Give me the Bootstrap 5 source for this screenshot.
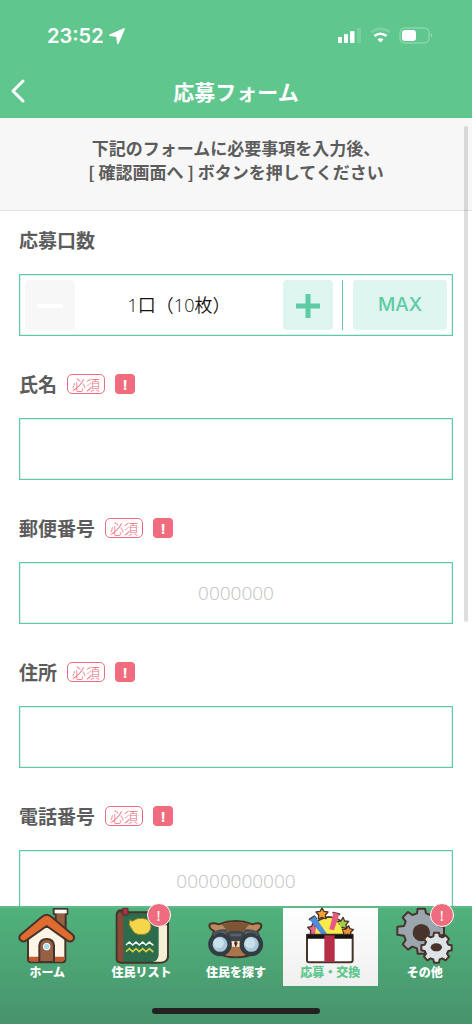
<!DOCTYPE html>
<html lang="ja">
<head>
<meta charset="utf-8">
<meta name="viewport" content="width=device-width, initial-scale=1">
<title>応募フォーム</title>
<link href="https://cdn.jsdelivr.net/npm/bootstrap@5.3.0/dist/css/bootstrap.min.css" rel="stylesheet">
<style>
  :root { --leaf: #5fc78e; --mint: #5fcba5; --rose: #ee6c7d; --ink: #5c5c5c; }
  body { font-family: "Noto Sans CJK JP", sans-serif; color: var(--ink); background: #fff; }
  .app-header { background: var(--leaf); }
  .status-row { height: 64px; padding: 8px 40px 0 47px; }
  .clock { font: 600 20px/24px Inter, sans-serif; }
  .title-row { display: grid; grid-template-columns: 44px 1fr 44px; height: 54px; }
  .title-row h1 { font-size: 21px; line-height: 54px; font-weight: 700; }
  .notice { background: #f7f7f7; border-bottom: 1px solid #e4e4e4; padding: 18px 16px 26px; font-size: 17px; line-height: 24px; font-weight: 700; }
  .entry-form { padding: 15px 19px 0 19px; }
  .entry { margin-bottom: 34px; }
  .entry-head { height: 28px; margin-bottom: 20px; gap: 10px; }
  .entry-head label, .entry-head .caption-text { font-size: 19px; line-height: 28px; font-weight: 700; }
  .need { border: 1px solid var(--rose); border-radius: 5px; color: var(--rose); font-size: 14px; line-height: 18px; font-weight: 300; padding: 0 4px; }
  .alert-mark { width: 20px; height: 20px; border-radius: 4px; background: var(--rose); color: #fff; font: 700 15px/20px "Noto Sans", sans-serif; text-align: center; }
  .box { border: 1px solid var(--mint); border-radius: 0; height: 62px; box-shadow: 0 0 0 1px #d9f3ea inset; }
  input.box { font-family: "Open Sans", "Noto Sans CJK JP", sans-serif; font-size: 19px; font-weight: 300; text-align: center; }
  input.box::placeholder { color: #c0c0c0; opacity: 1; }
  .stepper { padding: 5px; }
  .tile { height: 50px; border: 0; border-radius: 4px; background: #def6ef; color: var(--mint); }
  .tile:disabled { background: #f7f7f7; color: #fff; opacity: 1; }
  .tile-sq { width: 50px; }
  .tile-max { width: 94px; font: 500 19px/24px Inter, sans-serif; }
  .amount { font-family: "Open Sans", "Noto Sans CJK JP", sans-serif; font-size: 18px; line-height: 24px; font-weight: 350; color: #111; }
  .rule { width: 1px; height: 50px; margin: 0 10px 0 9px; background: var(--mint); }
  .scroll-thumb { top: 8px; right: 4px; width: 4px; height: 63%; border-radius: 2px; background: rgba(0,0,0,.13); }
  .tabs { background: linear-gradient(#50b27d, #48946b); border-top: 2px solid #62b98a; height: 118px; }
  .tab { height: 78px; font-size: 12px; line-height: 16px; font-weight: 900; color: #fff; text-decoration: none; }
  .tab svg { width: 60px; height: 56px; overflow: visible; }
  .tab.current { background: linear-gradient(#fff, #efefef); color: var(--leaf); }
  .dot { top: -5px; left: calc(50% + 5px); width: 24px; height: 24px; border: 1px solid #fff; border-radius: 50%; background: var(--rose); color: #fff; font: 400 15px/22px "Noto Sans", sans-serif; }
  .home-bar { bottom: 10px; left: 50%; width: 168px; height: 6px; margin-left: -84px; border-radius: 3px; background: #222; }
  .ol { stroke: #47332a; stroke-width: 6; stroke-linejoin: round; stroke-linecap: round; }
</style>
</head>
<body>
<div class="d-flex flex-column vh-100 overflow-hidden">
  <header class="app-header text-white flex-shrink-0">
    <div class="status-row d-flex align-items-center">
      <span class="clock">23:52</span>
      <svg class="ms-1" width="18" height="18" viewBox="0 0 18 18" aria-hidden="true"><path d="M16 2 2 8.200 9 9.200 10 16Z" fill="#fff" stroke="#fff" stroke-width="1.800" stroke-linejoin="round"/></svg>
      <svg class="ms-auto" width="96" height="18" viewBox="0 0 96 18" aria-hidden="true">
        <g fill="#fff"><rect x="2" y="10" width="4" height="6" rx="1"/><rect x="8" y="7" width="4" height="9" rx="1"/><rect x="14" y="4" width="4.500" height="12" rx="1"/><rect x="21" y="1" width="4" height="15" rx="1" opacity=".15"/></g>
        <g fill="none" stroke="#fff" stroke-width="2.600"><path d="M35.500 5.500a13 13 0 0 1 18 0" opacity=".18"/><path d="M38.500 9a9 9 0 0 1 12 0"/></g>
        <path d="M41.500 12.500q3-2.400 6 0L44.500 15.500Z" fill="#fff"/>
        <rect x="64" y="1" width="29" height="15" rx="4.500" fill="none" stroke="#fff" opacity=".4"/><rect x="66" y="3" width="14" height="11" rx="3" fill="#fff"/><path d="M95 6.500q1.800 2 0 4Z" fill="#fff" opacity=".5"/>
      </svg>
    </div>
    <div class="title-row">
      <button type="button" class="btn p-0 border-0 text-start ps-2 lh-1" aria-label="戻る"><svg width="20" height="26" viewBox="0 0 20 26"><path d="M15 3 5 13 15 23" fill="none" stroke="#fff" stroke-width="3" stroke-linecap="round" stroke-linejoin="round"/></svg></button>
      <h1 class="m-0 text-center">応募フォーム</h1>
    </div>
  </header>

  <main class="flex-fill overflow-hidden position-relative">
    <p class="notice text-center mb-0">下記のフォームに必要事項を入力後、<br>[ 確認画面へ ] ボタンを押してください</p>
    <form class="entry-form">
      <div class="entry">
        <div class="entry-head d-flex align-items-center"><span class="caption-text" id="units">応募口数</span></div>
        <div class="box stepper d-flex align-items-center" role="group" aria-labelledby="units">
          <button type="button" class="tile tile-sq p-0" disabled aria-label="減らす"><svg width="26" height="26" viewBox="0 0 26 26"><path d="M0 13h26" stroke="currentColor" stroke-width="4"/></svg></button>
          <output class="amount flex-fill text-center">1口（10枚）</output>
          <button type="button" class="tile tile-sq p-0" aria-label="増やす"><svg width="26" height="26" viewBox="0 0 26 26"><path d="M1 13h24M13 1v24" stroke="currentColor" stroke-width="5"/></svg></button>
          <span class="rule"></span>
          <button type="button" class="tile tile-max p-0">MAX</button>
        </div>
      </div>
      <div class="entry">
        <div class="entry-head d-flex align-items-center"><label for="name">氏名</label><span class="need">必須</span><span class="alert-mark">!</span></div>
        <input class="form-control box" id="name" type="text">
      </div>
      <div class="entry">
        <div class="entry-head d-flex align-items-center"><label for="zip">郵便番号</label><span class="need">必須</span><span class="alert-mark">!</span></div>
        <input class="form-control box" id="zip" type="text" inputmode="numeric" placeholder="0000000">
      </div>
      <div class="entry">
        <div class="entry-head d-flex align-items-center"><label for="address">住所</label><span class="need">必須</span><span class="alert-mark">!</span></div>
        <input class="form-control box" id="address" type="text">
      </div>
      <div class="entry">
        <div class="entry-head d-flex align-items-center"><label for="tel">電話番号</label><span class="need">必須</span><span class="alert-mark">!</span></div>
        <input class="form-control box" id="tel" type="tel" placeholder="00000000000">
      </div>
    </form>
    <div class="scroll-thumb position-absolute"></div>
  </main>

  <nav class="tabs flex-shrink-0 position-relative">
    <div class="row g-0 row-cols-5">
      <div class="col"><a href="#home" class="tab d-flex flex-column align-items-center">
        <svg viewBox="51 38 180 168" aria-hidden="true">
          <path class="ol" d="M167 95V56h-6V41h41v15h-5v55Z" fill="#956044"/><path d="M164 43h36v11h-36Z" fill="#fff"/>
          <path class="ol" d="M84 128v64q0 9 9 9h95q8 0 8-9v-64L140 82Z" fill="#fdf5e6"/>
          <path d="M87 184h106v10q0 4-5 4H92q-5 0-5-4Z" fill="#c35b2f"/>
          <path class="ol" d="M140 58q-8 0-15 7L61 119q-7 9 2 17 8 5 16-1l61-43 61 43q9 6 17 1 8-9 1-17L155 65q-7-7-15-7Z" fill="#e06b30"/>
          <path class="ol" d="M118 200v-49q1-20 22-20t22 20v49Z" fill="#956044"/>
          <circle cx="140" cy="154" r="10" fill="#a9dcec" stroke="#fff" stroke-width="3"/>
        </svg>ホーム</a></div>
      <div class="col"><a href="#residents" class="tab d-flex flex-column align-items-center position-relative">
        <svg viewBox="50 38 180 168" aria-hidden="true">
          <path class="ol" d="M79 45q-15 0-15 14v130q0 13 14 13h116q26 0 24-24V62q0-11-12-11H79Z" fill="#2c6b4b"/>
          <path d="M67 60q0-8 11-8h6v147h-7q-10 0-10-10Z" fill="#8b4a36"/>
          <path d="M190 90h25v88q1 21-19 21h-24q17-3 18-21Z" fill="#f6efd5"/>
          <path d="M82 39h16v20H82Z" fill="#b32d45" stroke="#47332a" stroke-width="3"/>
          <path d="M103 73q8 8 13 2 8-7 25-6 26 2 26 26-3 23-29 23-23 0-29-18-12-11-6-27Z" fill="#f5d64b" stroke="#8d8133" stroke-width="3"/>
          <path d="m92 149 10-9 10 9 10-9 10 9 10-9 10 9 10-9 12 10" fill="none" stroke="#eaf6ed" stroke-width="5"/>
          <path d="m92 169 10-9 10 9 10-9 10 9 10-9 10 9 10-9 12 10" fill="none" stroke="#d6ca45" stroke-width="5"/>
        </svg>住民リスト<span class="dot position-absolute text-center">!</span></a></div>
      <div class="col"><a href="#search" class="tab d-flex flex-column align-items-center">
        <svg viewBox="48 38 180 168" aria-hidden="true">
          <path class="ol" d="M72 107q-16-6-13-20 9-7 27 0 25-10 51-10t51 10q16-7 25 0 4 12-11 21 6 12 6 30-3 48-70 48t-72-48q0-19 6-31Z" fill="#bb8a5c"/>
          <path d="m94 86 43-7 42 7-24 27h-37Z" fill="#7d5735"/>
          <path d="M82 150h112q-6 30-56 33-50-3-56-33Z" fill="#a8764a"/>
          <path d="M122 138h10l5 16h-12ZM143 138h10l-3 16h-12Z" fill="#f8ead6"/><path d="m132 144 5-7 6 7-6 12Z" fill="#47332a"/>
          <path d="M107 111q30-10 60 0l-6 26h-48Z" fill="#3e454b"/><path d="M121 115h32v8h-32Z" fill="#59626a"/>
          <g fill="#a9c9d9" stroke="#343c43"><circle cx="90" cy="147" r="29" stroke-width="13"/><circle cx="184" cy="147" r="29" stroke-width="13"/></g>
          <g fill="#c7e0eb"><circle cx="86" cy="143" r="16"/><circle cx="180" cy="143" r="16"/></g>
          <path d="M72 117q11-13 35-10M166 107q24-3 36 10" fill="none" stroke="#485159" stroke-width="10" stroke-linecap="round"/>
        </svg>住民を探す</a></div>
      <div class="col"><a href="#apply" class="tab current d-flex flex-column align-items-center" aria-current="page">
        <svg viewBox="76 38 180 168" aria-hidden="true">
          <path d="M112 121q-2-36 23-48 30-18 61 2 21 16 22 46Z" fill="#f7e743" stroke="#47332a" stroke-width="5"/>
          <g stroke="#47332a" stroke-width="4" stroke-linejoin="round">
            <path d="m142 38 6 10 12 2-8 9 2 12-12-5-11 5 1-12-8-9 12-2Z" fill="#f3a334"/>
            <path d="m116 81 6 12 13 1-9 10 4 17h-23l1-15-9-10 12-3Z" fill="#ea6584"/>
            <path d="m205 66 5 11 12 1-8 10 2 12-12-4-11 4 1-12-8-9 13-2Z" fill="#a1cc45"/>
            <path d="m222 91 4 9 10 3-8 8 1 11h-25l3-11-7-8 14-2Z" fill="#ef9134"/>
          </g>
          <path d="M122 118q-2-30 20-42 26-12 46 4 16 16 16 38Z" fill="#f9ec4a"/>
          <path class="ol" d="m105 72 14-9 6 8M176 52l18 5" fill="none"/>
          <path d="m105 73 15-10 38 54-13 6Z" fill="#4d8dde"/><path d="m177 51 17 6-16 48-14-3Z" fill="#e65a83"/>
          <path class="ol" d="M97 118h137v77q0 6-7 6H104q-7 0-7-6Z" fill="#fff"/>
          <path d="M97 118h137v12H97Z" fill="#171512"/><path d="M149 120h31v79h-31Z" fill="#b52d47"/>
        </svg>応募・交換</a></div>
      <div class="col"><a href="#other" class="tab d-flex flex-column align-items-center position-relative">
        <svg viewBox="59 38 180 168" aria-hidden="true">
          <path class="ol" d="m125 54 2-14h22l3 14 13 5 12-9 17 16-9 13 5 13 16 2v24l-16 3-5 13 9 13-17 17-12-10-13 5-3 16h-22l-2-16-14-5-13 9-16-16 9-13-5-13-20-3V94l20-2 5-13-9-13 16-16 13 9Z" fill="#9aa5ad"/>
          <circle cx="138" cy="112" r="26" fill="#47332a"/>
          <path class="ol" d="m174 123 2-11h15l2 11 8 3 10-6 10 11-6 9 4 8 10 2v15l-10 2-4 8 6 9-10 11-10-6-8 3-2 10h-15l-2-10-8-3-10 6-10-11 6-9-4-8-10-2v-15l10-2 4-8-6-9 10-11 10 6Z" fill="#dce4e8"/>
          <ellipse cx="183" cy="156" rx="17" ry="12" fill="#47332a"/>
        </svg>その他<span class="dot position-absolute text-center">!</span></a></div>
    </div>
    <div class="home-bar position-absolute"></div>
  </nav>
</div>
<script src="https://cdn.jsdelivr.net/npm/bootstrap@5.3.0/dist/js/bootstrap.bundle.min.js"></script>
</body>
</html>
